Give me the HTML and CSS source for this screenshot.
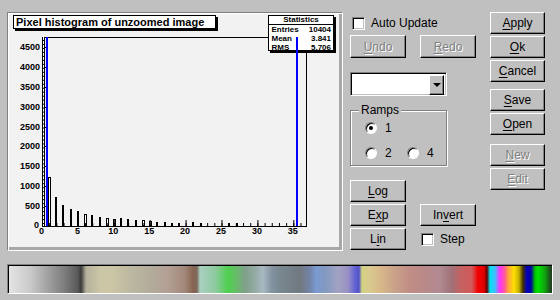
FILE: index.html
```html
<!DOCTYPE html>
<html>
<head>
  <meta charset="UTF-8" />
  <title>Palette Editor</title>
  <link rel="stylesheet" href="styles.css">
</head>
<body>
  <div class="window">
    <div class="top">
      <div class="canvas-frame">
        <div class="pad">
          <svg class="plot" width="334" height="237" viewBox="8 13 334 237">
            <!-- frame -->
            <path d="M42 37.5H307M306.5 37V226M42 226.5H307" stroke="#000" fill="none"/>
            <!-- bin 0 + y axis ticks -->
            <rect x="42" y="37" width="3" height="189" fill="#000"/>
            <line x1="43.5" y1="37" x2="43.5" y2="226" stroke="#fff" stroke-dasharray="2.98 1"/>
            <path d="M45 47.5h3M45 67.5h3M45 87.5h3M45 107.5h3M45 127.5h3M45 146.5h3M45 166.5h3M45 186.5h3M45 206.5h3" stroke="#000"/>
            <!-- bars -->
            <g class="bars">
              <rect class="hollow" x="48.5" y="177.5" width="2" height="48.5"/>
              <rect x="55" y="197" width="2" height="29"/>
              <rect x="62" y="205" width="2" height="21"/>
              <rect x="70" y="209" width="2" height="17"/>
              <rect x="77" y="211" width="2" height="15"/>
              <rect class="hollow" x="84.5" y="214.5" width="2" height="11.5"/>
              <rect x="91" y="215" width="2" height="11"/>
              <rect x="99" y="217" width="2" height="9"/>
              <rect class="hollow" x="106.5" y="218.5" width="2" height="7.5"/>
              <rect class="hollow" x="113.5" y="219.5" width="2" height="6.5"/>
              <rect x="120" y="218" width="2" height="8"/>
              <rect x="127" y="219" width="2" height="7"/>
              <rect x="135" y="220" width="2" height="6"/>
              <rect class="hollow" x="142.5" y="220.5" width="2" height="5.5"/>
              <rect class="hollow" x="149.5" y="221.5" width="2" height="4.5"/>
              <rect x="156" y="222" width="2" height="4"/>
              <rect x="164" y="222" width="2" height="4"/>
              <rect x="171" y="223" width="2" height="3"/>
              <rect x="178" y="223" width="2" height="3"/>
              <rect x="192" y="222" width="2" height="4"/>
              <rect x="200" y="223" width="2" height="3"/>
              <rect x="228" y="223" width="2" height="3"/>
              <rect x="236" y="223" width="2" height="3"/>
            </g>
            <!-- x axis ticks -->
            <line x1="42" y1="224.5" x2="307" y2="224.5" stroke="#000" stroke-width="3" stroke-dasharray="1 6.18"/>
            <line x1="42" y1="223" x2="307" y2="223" stroke="#000" stroke-width="6" stroke-dasharray="1 34.9"/>
            <!-- axis labels -->
            <g class="ylab">
              <text x="40" y="50">4500</text>
              <text x="40" y="70">4000</text>
              <text x="40" y="90">3500</text>
              <text x="40" y="110">3000</text>
              <text x="40" y="130">2500</text>
              <text x="40" y="149">2000</text>
              <text x="40" y="169">1500</text>
              <text x="40" y="189">1000</text>
              <text x="40" y="209">500</text>
              <text x="39" y="228">0</text>
            </g>
            <g class="xlab">
              <text x="41.5" y="234">0</text>
              <text x="77.4" y="234">5</text>
              <text x="113.3" y="234">10</text>
              <text x="149.2" y="234">15</text>
              <text x="185.1" y="234">20</text>
              <text x="221" y="234">25</text>
              <text x="256.9" y="234">30</text>
              <text x="292.8" y="234">35</text>
            </g>
            <!-- stats box -->
            <rect x="270" y="17" width="66" height="36" fill="#000"/>
            <rect x="268.5" y="15.5" width="65" height="35" fill="#fff" stroke="#000"/>
            <path d="M268 24.5H334" stroke="#000"/>
            <g class="stats">
              <text class="mid" x="301" y="22">Statistics</text>
              <text x="271.5" y="31.5">Entries</text>
              <text class="end" x="331" y="31.5">10404</text>
              <text x="271.5" y="40.5">Mean</text>
              <text class="end" x="331" y="40.5">3.841</text>
              <text x="271.5" y="49.5">RMS</text>
              <text class="end" x="331" y="49.5">5.706</text>
            </g>
            <!-- range markers -->
            <rect x="46" y="37" width="2" height="189" fill="#0000ff"/>
            <rect x="296" y="37" width="2" height="189" fill="#0000ff"/>
            <!-- title -->
            <rect x="15" y="17" width="203" height="14" fill="#000"/>
            <rect x="13.5" y="15.5" width="202" height="13" fill="#fff" stroke="#000"/>
            <text class="title" x="16" y="26">Pixel histogram of unzoomed image</text>
          </svg>
        </div>
      </div>

      <div class="controls">
        <div class="col-mid">
          <label class="check auto"><span class="box"></span>Auto Update</label>
          <div class="btn-row">
            <button class="btn disabled"><u>U</u>ndo</button>
            <button class="btn disabled"><u>R</u>edo</button>
          </div>
          <div class="combo"><span class="combo-btn"><span class="arrow"></span></span></div>
          <fieldset class="ramps">
            <legend>Ramps</legend>
            <div class="ramps-body">
              <label class="radio checked"><span class="dot"></span>1</label>
              <span></span>
              <label class="radio"><span class="dot"></span>2</label>
              <label class="radio"><span class="dot"></span>4</label>
            </div>
          </fieldset>
          <div class="scale-grid">
            <button class="btn"><u>L</u>og</button>
            <span></span>
            <button class="btn">E<u>x</u>p</button>
            <button class="btn">In<u>v</u>ert</button>
            <button class="btn">L<u>i</u>n</button>
            <label class="check step"><span class="box"></span>Step</label>
          </div>
        </div>

        <div class="col-side">
          <button class="btn"><u>A</u>pply</button>
          <button class="btn"><u>O</u>k</button>
          <button class="btn"><u>C</u>ancel</button>
          <button class="btn gap-save"><u>S</u>ave</button>
          <button class="btn"><u>O</u>pen</button>
          <button class="btn disabled gap-new"><u>N</u>ew</button>
          <button class="btn disabled"><u>E</u>dit</button>
        </div>
      </div>
    </div>

    <div class="palette"></div>
  </div>
</body>
</html>
```

FILE: styles.css
```css
* {
  box-sizing: border-box;
}
body {
  margin: 0;
  background: #c0c0c0;
  font-family: "Liberation Sans", Arial, sans-serif;
  font-size: 12px;
  color: #000;
}
.window {
  width: 560px;
  height: 300px;
  padding: 12px 0 0 7px;
}
.top {
  display: flex;
  align-items: flex-start;
}

/* canvas */
.canvas-frame {
  width: 336px;
  height: 239px;
  border: 1px solid;
  border-color: #808080 #fff #fff #808080;
}
.pad {
  width: 334px;
  height: 237px;
  background: #f2f2f2;
  box-shadow: inset 1px 1px #fff, inset -3px -3px #a8a8a8;
}
.plot {
  display: block;
}
.plot text {
  font-family: "Liberation Sans", Arial, sans-serif;
  font-weight: bold;
}
.plot .title {
  font-size: 11px;
}
.plot .ylab text {
  font-size: 9px;
  text-anchor: end;
}
.plot .xlab text {
  font-size: 9px;
  text-anchor: middle;
}
.plot .stats text {
  font-size: 8px;
}
.plot .stats .mid {
  text-anchor: middle;
}
.plot .stats .end {
  text-anchor: end;
}
.bars rect {
  fill: #000;
}
.bars rect.hollow {
  fill: #fff;
  stroke: #000;
}

/* controls */
.controls {
  display: flex;
  align-items: flex-start;
  margin-left: 7px;
}
.col-mid {
  width: 127px;
  display: flex;
  flex-direction: column;
  align-items: flex-start;
}
.btn {
  width: 56px;
  height: 22px;
  padding: 0;
  background: #c0c0c0;
  border: 1px solid;
  border-color: #fff #000 #000 #fff;
  box-shadow: inset -1px -1px #808080;
  font: inherit;
  color: #000;
  line-height: 18px;
}
.btn u {
  text-decoration-thickness: 1px;
  text-underline-offset: 2px;
}
.btn.disabled {
  color: #808080;
  text-shadow: 1px 1px #fff;
}

.check {
  display: flex;
  align-items: center;
  gap: 6px;
  height: 13px;
  line-height: 13px;
}
.check .box {
  width: 13px;
  height: 13px;
  background: #fff;
  border: 1px solid;
  border-color: #808080 #fff #fff #808080;
  box-shadow: inset 1px 1px #000, inset -1px -1px #c0c0c0;
}
.auto {
  margin: 5px 0 0 2px;
}
.step {
  margin-left: 1px;
  align-self: center;
}

.btn-row {
  display: flex;
  gap: 14px;
  margin-top: 5px;
}
.btn-row .btn {
  height: 23px;
}

.combo {
  margin-top: 14px;
  width: 97px;
  height: 24px;
  padding: 2px;
  background: #fff;
  border: 1px solid;
  border-color: #808080 #fff #fff #808080;
  box-shadow: inset 1px 1px #000, inset -1px -1px #c0c0c0;
  display: flex;
  justify-content: flex-end;
}
.combo-btn {
  width: 15px;
  height: 20px;
  background: #c0c0c0;
  border: 1px solid;
  border-color: #fff #000 #000 #fff;
  box-shadow: inset -1px -1px #808080;
  display: flex;
  align-items: center;
  justify-content: center;
}
.combo-btn .arrow {
  width: 0;
  height: 0;
  border-left: 4px solid transparent;
  border-right: 4px solid transparent;
  border-top: 4px solid #000;
}

.ramps {
  margin: 7px 0 0;
  padding: 0 0 6px 8px;
  width: 97px;
  border: 1px solid #808080;
  box-shadow: inset 1px 1px #fff, 1px 1px #fff;
}
.ramps legend {
  padding: 0 2px;
  line-height: 14px;
  background: #c0c0c0;
}
.ramps-body {
  display: grid;
  grid-template-columns: 42px auto;
  grid-auto-rows: 12px;
  row-gap: 13px;
  padding: 5px 0 0 6px;
}
.radio {
  display: flex;
  align-items: center;
  gap: 8px;
  line-height: 12px;
}
.radio .dot {
  position: relative;
  width: 12px;
  height: 12px;
  border-radius: 50%;
  background: #fff;
  border: 1px solid;
  border-color: #808080 #fff #fff #808080;
  box-shadow: inset 1px 1px #000;
}
.radio.checked .dot::after {
  content: "";
  position: absolute;
  left: 3px;
  top: 3px;
  width: 4px;
  height: 4px;
  border-radius: 50%;
  background: #000;
}

.scale-grid {
  margin-top: 14px;
  display: grid;
  grid-template-columns: 56px 56px;
  grid-auto-rows: 22px;
  gap: 2px 14px;
}

.col-side {
  width: 55px;
  margin-left: 13px;
  display: flex;
  flex-direction: column;
  gap: 2px;
}
.col-side .btn {
  width: 55px;
}
.col-side .gap-save {
  margin-top: 5px;
}
.col-side .gap-new {
  margin-top: 7px;
}

/* palette bar */
.palette {
  margin-top: 13px;
  width: 546px;
  height: 30px;
  border: 1px solid;
  border-color: #808080 #fff #fff #808080;
  box-shadow: inset 1px 1px #000;
  background: linear-gradient(to right,
    #e4e4e4 1px, #cacaca 22px, #9c9c9c 42px, #7c7c7c 57px, #585858 70px, #3a3a3a 73px,
    #b4b09c 78px, #cbc6a6 92px, #ccc6a6 104px, #b9b59f 127px, #b1a999 147px, #b49f95 160px,
    #a08778 177px, #8a6452 185px, #7e6a5c 189px, #a9d0c0 192px, #8fcaa0 207px, #4fd050 220px,
    #62c064 227px, #80a08a 237px, #93aaa4 247px, #a9b9c2 255px, #8292a0 264px, #788890 272px,
    #717880 292px, #7284a8 302px, #7a9ad0 308px, #8299c0 317px, #a2a2c2 330px, #9890c4 340px,
    #6262d4 347px, #5252c8 351px, #d2d282 354px, #d9c98f 362px, #d9b989 372px, #c9a189 387px,
    #c18d85 402px, #b98989 417px, #b18991 432px, #a07078 444px, #c26262 452px, #d25858 464px,
    #f20000 470px, #e00000 476px, #600000 479px, #00e2f2 482px, #40c0ff 487px, #ff30ff 492px,
    #ff6090 497px, #ffa040 500px, #ffe000 506px, #c0b000 511px, #403000 515px, #0000c0 519px,
    #0000a0 523px, #00c000 527px, #00e000 530px, #10a010 537px, #204020 543px);
}
```
